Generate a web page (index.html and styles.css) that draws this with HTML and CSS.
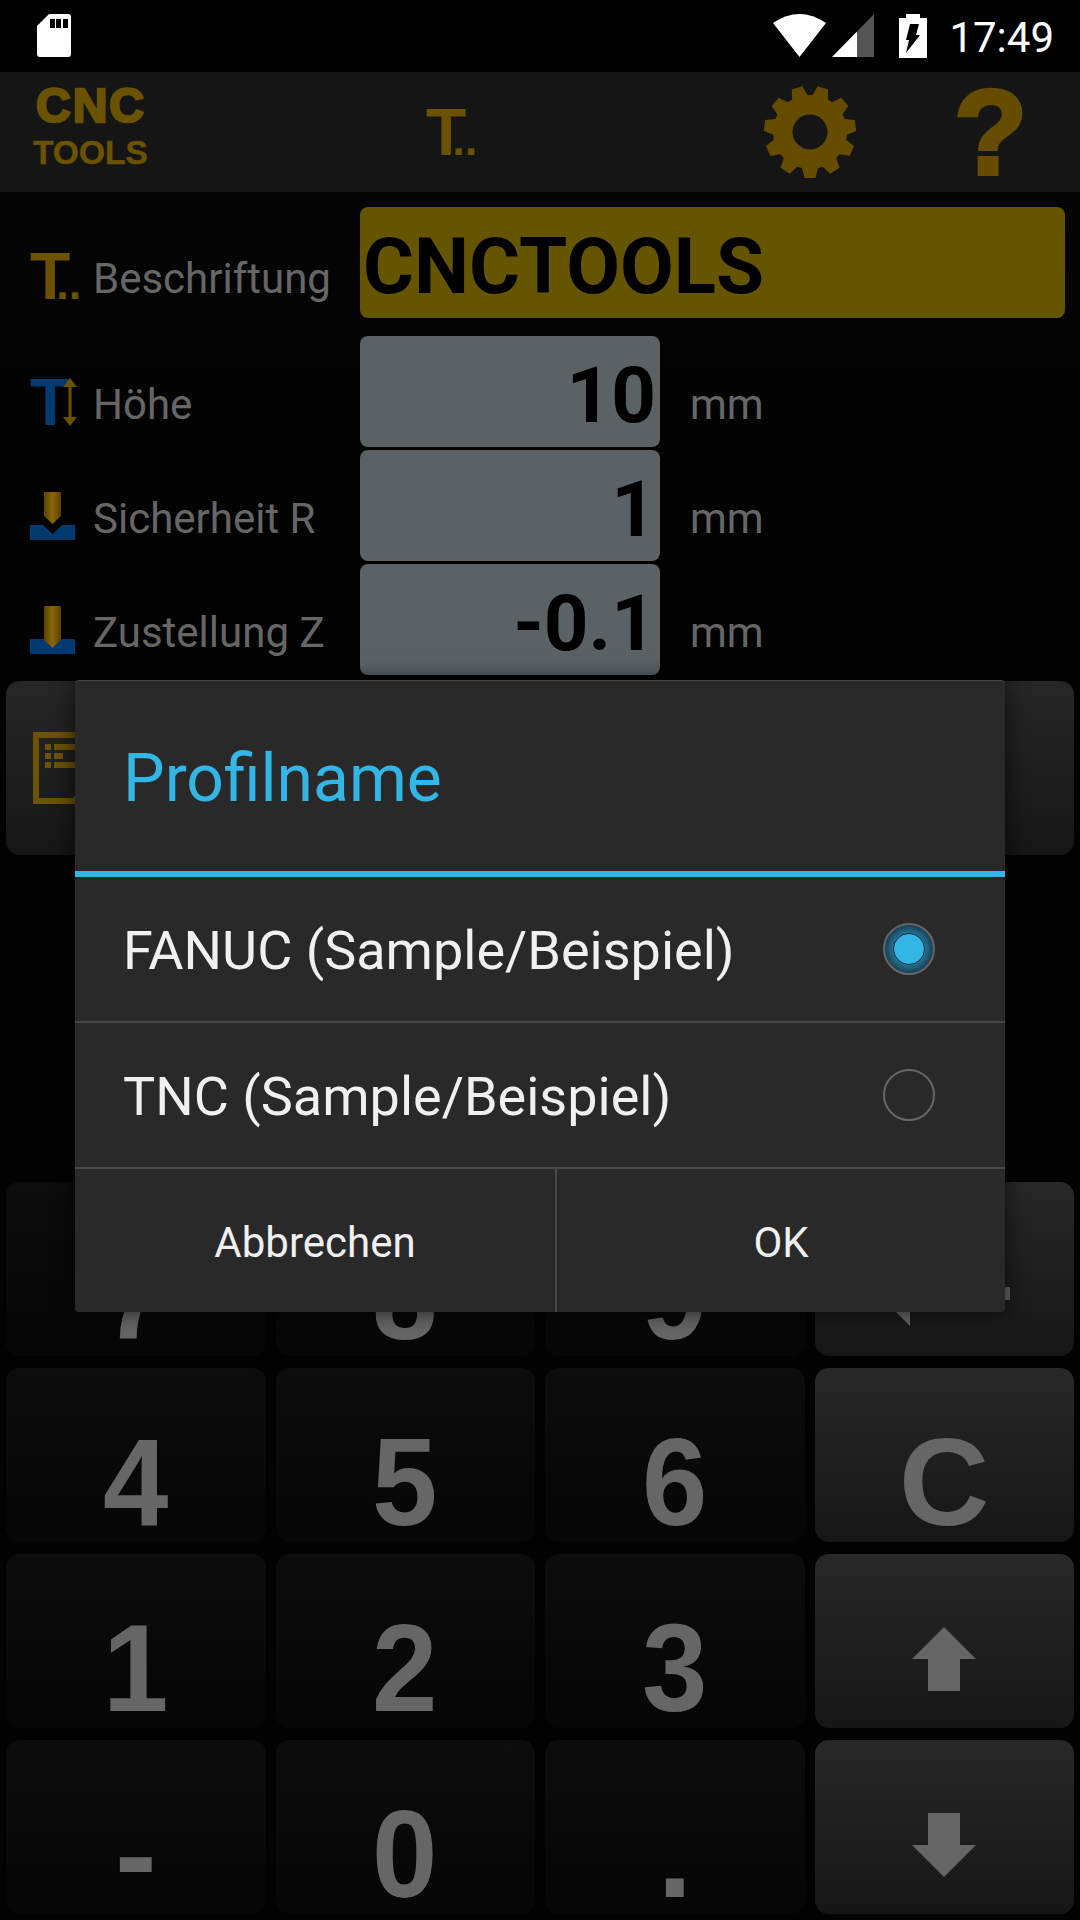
FILE: index.html
```html
<!DOCTYPE html>
<html lang="de">
<head>
  <meta charset="UTF-8" />
  <meta name="viewport" content="width=device-width, initial-scale=1.0"/>
  <title>CNC Tools</title>
  <link rel="stylesheet" href="styles.css">
</head>
<body>
<div class="page">
  <div class="statusbar">
    <svg class="ic-sd" width="34" height="43" viewBox="0 0 34 43">
      <path fill="#fff" d="M12 0H31a3 3 0 0 1 3 3V40a3 3 0 0 1-3 3H3a3 3 0 0 1-3-3V12Z"/>
      <path fill="#000" d="M13 5h5v9h-5zM19 5h5v9h-5zM26 5h5v9h-5z"/>
    </svg>
    <svg class="ic-wifi" width="53" height="43" viewBox="0 0 53 43">
      <path fill="#fff" d="M26.5 43 0 9Q26.5-9 53 9Z"/>
    </svg>
    <svg class="ic-signal" width="42" height="43" viewBox="0 0 42 43">
      <path fill="#fff" d="M0 43 25 17.5V43Z"/>
      <path fill="#555" d="M25 17.5 42 0V43H25Z"/>
    </svg>
    <svg class="ic-battery" width="28" height="44" viewBox="0 0 28 44">
      <path fill="#fff" d="M7 0H21V4H28V44H0V4H7Z"/>
      <path fill="#000" d="M11 10H20L17 21H21L7 39 10 26H7Z"/>
    </svg>
    <span class="clock">17:49</span>
  </div>

  <div class="toolbar">
    <div class="logo">
      <span class="logo-cnc">CNC</span>
      <span class="logo-tools">TOOLS</span>
    </div>
    <span class="t-icon">T<span class="t-dots">..</span></span>
    <svg class="ic-gear" width="92" height="92" viewBox="-46 -46 92 92">
      <g class="gear">
        <circle r="37"/>
        <path id="tooth" d="M-8.5-34-5.5-46H5.5L8.5-34Z" transform="rotate(180)"/>
        <use href="#tooth" transform="rotate(32.73)"/>
        <use href="#tooth" transform="rotate(65.45)"/>
        <use href="#tooth" transform="rotate(98.18)"/>
        <use href="#tooth" transform="rotate(130.91)"/>
        <use href="#tooth" transform="rotate(163.64)"/>
        <use href="#tooth" transform="rotate(196.36)"/>
        <use href="#tooth" transform="rotate(229.09)"/>
        <use href="#tooth" transform="rotate(261.82)"/>
        <use href="#tooth" transform="rotate(294.55)"/>
        <use href="#tooth" transform="rotate(327.27)"/>
      </g>
      <circle class="gear-hole" r="17.5"/>
    </svg>
    <span class="help">?</span>
  </div>

  <div class="form">
    <div class="row row-caption">
      <div class="label">
        <span class="t-icon">T<span class="t-dots">..</span></span>
        <span class="label-text">Beschriftung</span>
      </div>
      <div class="field field-text">CNCTOOLS</div>
    </div>
    <div class="row">
      <div class="label">
        <span class="ic-height">
          <span class="t-icon t-blue">T</span>
          <svg class="ic-arrow" width="16" height="48" viewBox="0 0 16 48">
            <path fill="#6b5200" d="M8 0 15 9H9.500V39H15L8 48 1 39H6.500V9H1Z"/>
          </svg>
        </span>
        <span class="label-text">Höhe</span>
      </div>
      <div class="field">10</div>
      <span class="unit">mm</span>
    </div>
    <div class="row">
      <div class="label">
        <svg width="48" height="48" viewBox="0 0 48 48">
          <defs>
            <linearGradient id="tool">
              <stop offset="0" stop-color="#5a4000"/>
              <stop offset=".5" stop-color="#8a6608"/>
              <stop offset="1" stop-color="#5a4000"/>
            </linearGradient>
          </defs>
          <path fill="url(#tool)" d="M14 0H31V24L22.500 32 14 24Z"/>
          <path fill="#003a70" d="M0 33H13L22.500 42 32 33H45V48H0Z"/>
        </svg>
        <span class="label-text">Sicherheit R</span>
      </div>
      <div class="field">1</div>
      <span class="unit">mm</span>
    </div>
    <div class="row">
      <div class="label">
        <svg width="48" height="48" viewBox="0 0 48 48">
          <path fill="#003a70" d="M0 33H45V48H0Z"/>
          <path fill="url(#tool)" d="M14 0H31V34L22.500 42 14 34Z"/>
        </svg>
        <span class="label-text">Zustellung Z</span>
      </div>
      <div class="field">-0.1</div>
      <span class="unit">mm</span>
    </div>
  </div>

  <div class="action">
    <svg width="80" height="72" viewBox="0 0 80 72">
      <g fill="#6b5300">
        <path d="M0 0H80V72H0ZM6 6V66H40L46 60V6Z" fill-rule="evenodd"/>
        <path d="M12 12h6v6h-6zM21 12h30v6h-30zM12 21h6v6h-6zM21 21h9v6h-9zM12 30h6v6h-6zM21 30h30v6h-30z"/>
      </g>
    </svg>
  </div>

  <div class="keypad">
    <div class="key"><span class="digit">7</span></div>
    <div class="key"><span class="digit">8</span></div>
    <div class="key"><span class="digit">9</span></div>
    <div class="key key-fn">
      <svg class="ic-back" width="132" height="64" viewBox="0 0 132 64">
        <path fill="#666" d="M0 32 32 0V25H132V38H32V64Z"/>
      </svg>
    </div>
    <div class="key"><span class="digit">4</span></div>
    <div class="key"><span class="digit">5</span></div>
    <div class="key"><span class="digit">6</span></div>
    <div class="key key-fn">C</div>
    <div class="key"><span class="digit">1</span></div>
    <div class="key"><span class="digit">2</span></div>
    <div class="key"><span class="digit">3</span></div>
    <div class="key key-fn">
      <svg class="ic-key" width="64" height="64" viewBox="0 0 64 64">
        <path fill="#666" d="M32 0 64 32H48V64H16V32H0Z"/>
      </svg>
    </div>
    <div class="key">-</div>
    <div class="key"><span class="digit">0</span></div>
    <div class="key">.</div>
    <div class="key key-fn">
      <svg class="ic-key" width="64" height="64" viewBox="0 0 64 64">
        <path fill="#666" d="M32 64 0 32H16V0H48V32H64Z"/>
      </svg>
    </div>
  </div>

  <div class="dialog">
    <div class="dialog-title">Profilname</div>
    <div class="dialog-row">
      <span>FANUC (Sample/Beispiel)</span>
      <span class="radio radio-on"></span>
    </div>
    <div class="dialog-row">
      <span>TNC (Sample/Beispiel)</span>
      <span class="radio"></span>
    </div>
    <div class="dialog-buttons">
      <div class="dialog-btn dialog-btn-cancel">Abbrechen</div>
      <div class="dialog-btn">OK</div>
    </div>
  </div>
</div>
</body>
</html>
```

FILE: styles.css
```css
* {
  box-sizing: border-box;
}
body {
  margin: 0;
  background: #020202;
  font-family: Roboto, sans-serif;
}
.page {
  position: relative;
  width: 1080px;
  height: 1920px;
  overflow: hidden;
  display: flex;
  flex-direction: column;
  background: linear-gradient(#060606, #020202 30%);
  padding-bottom: 6px;
}

/* status bar */
.statusbar {
  height: 72px;
  flex: none;
  background: #000;
  display: flex;
  align-items: flex-start;
  padding: 14px 26px 0 37px;
}
.ic-wifi {
  margin-left: auto;
}
.ic-signal {
  margin-left: 6px;
}
.ic-battery {
  margin-left: 25px;
}
.clock {
  margin-left: 22px;
  color: #fff;
  font-size: 42px;
  line-height: 48px;
}

/* toolbar */
.toolbar {
  height: 120px;
  flex: none;
  background: #151515;
  display: flex;
  align-items: center;
  padding-left: 33px;
}
.logo {
  width: 393px;
  padding-bottom: 12px;
  display: flex;
  flex-direction: column;
  font-family: "Liberation Sans", Arial, sans-serif;
  font-weight: bold;
  color: #6b5200;
  line-height: 1;
}
.logo-cnc {
  font-size: 48px;
  height: 54px;
  letter-spacing: 2px;
  margin-left: 3px;
  -webkit-text-stroke: 2.5px #6b5200;
}
.logo-tools {
  font-size: 33.5px;
  -webkit-text-stroke: 0.5px #6b5200;
}
.t-icon {
  display: inline-block;
  width: 48px;
  height: 48px;
  font-family: "Liberation Sans", Arial, sans-serif;
  font-weight: bold;
  font-size: 66px;
  line-height: 48px;
  color: #6b5200;
  white-space: nowrap;
}
.t-dots {
  font-size: 45px;
  margin-left: -14px;
}
.t-blue {
  color: #003a70;
  width: 36px;
}
.ic-gear {
  margin-left: 290px;
}
.gear {
  fill: #654c00;
}
.gear-hole {
  fill: #151515;
}
.help {
  margin-left: 98px;
  font-family: "Liberation Sans", Arial, sans-serif;
  font-weight: bold;
  font-size: 120px;
  line-height: 120px;
  color: #654c00;
  -webkit-text-stroke: 4px #654c00;
}

/* form */
.form {
  padding-top: 15px;
  display: flex;
  flex-direction: column;
  gap: 3px;
}
.row {
  height: 111px;
  display: flex;
  align-items: center;
}
.row-caption {
  margin-bottom: 15px;
}
.label {
  width: 360px;
  padding: 21px 0 0 30px;
  display: flex;
  align-items: center;
  gap: 15px;
  color: #666;
  font-size: 42px;
}
.label-text {
  padding-top: 5px;
}
.row-caption .label {
  padding-top: 26px;
}
.ic-height {
  display: flex;
  width: 48px;
  height: 48px;
}
.ic-height .t-icon {
  flex: none;
}
.ic-arrow {
  margin-left: -4px;
}
.field {
  width: 300px;
  height: 111px;
  padding: 8px 4px 0 0;
  border-radius: 8px;
  background: #5a6266;
  color: #000;
  font-size: 78px;
  font-weight: bold;
  line-height: 103px;
  text-align: right;
}
.field-text {
  width: 705px;
  padding: 9px 0 0 3px;
  line-height: 102px;
  background: #665500;
  text-align: left;
}
.unit {
  margin: 25px 0 0 30px;
  color: #666;
  font-size: 42px;
}

/* hidden behind the dialog */
.action {
  height: 174px;
  margin: 6px 6px 0;
  padding-left: 27px;
  border-radius: 14px;
  background: linear-gradient(#272727, #161616);
  display: flex;
  align-items: center;
}

/* keypad */
.keypad {
  margin: auto 6px 0;
  display: grid;
  grid-template-columns: repeat(4, 1fr);
  grid-auto-rows: 174px;
  gap: 12px 10px;
}
.key {
  border-radius: 14px;
  background: linear-gradient(#0c0c0c, #060606);
  color: #666;
  font-family: "Liberation Sans", Arial, sans-serif;
  font-weight: bold;
  font-size: 125px;
  line-height: 120px;
  padding-top: 54px;
  display: flex;
  align-items: center;
  justify-content: center;
}
.key-fn {
  background: linear-gradient(#282828, #161616);
}
.digit {
  display: inline-block;
  transform: scaleX(0.94);
}
.ic-key {
  margin-bottom: 18px;
}
.ic-back {
  margin-bottom: 4px;
}

/* dialog */
.dialog {
  position: absolute;
  left: 75px;
  top: 680px;
  width: 930px;
  height: 632px;
  border-radius: 4px;
  background: #292929;
  border-top: 1px solid #454545;
  box-shadow: 0 0 22px rgba(0, 0, 0, 0.7);
  display: flex;
  flex-direction: column;
  color: #f0f0f0;
}
.dialog-title {
  height: 196px;
  flex: none;
  border-bottom: 6px solid #33b5e5;
  padding: 4px 0 0 48px;
  display: flex;
  align-items: center;
  color: #33b5e5;
  font-size: 66px;
}
.dialog-row {
  height: 146px;
  flex: none;
  border-bottom: 2px solid #484848;
  padding: 0 70px 0 48px;
  display: flex;
  align-items: center;
  justify-content: space-between;
  font-size: 54px;
}
.dialog-row span:first-child {
  padding-top: 3px;
}
.radio {
  width: 52px;
  height: 52px;
  border-radius: 50%;
  border: 2px solid #666;
  display: flex;
  align-items: center;
  justify-content: center;
}
.radio-on {
  background: radial-gradient(circle, #2a7fa3 40%, #16384a 75%, #22282b 100%);
}
.radio-on::after {
  content: "";
  width: 30px;
  height: 30px;
  border-radius: 50%;
  background: #33b5e5;
  border: 1px solid #0e2c3a;
}
.dialog-buttons {
  flex: 1;
  display: flex;
}
.dialog-btn {
  flex: 1;
  padding-top: 3px;
  display: flex;
  align-items: center;
  justify-content: center;
  font-size: 42px;
}
.dialog-btn-cancel {
  flex: none;
  width: 482px;
  border-right: 2px solid #484848;
}
```
